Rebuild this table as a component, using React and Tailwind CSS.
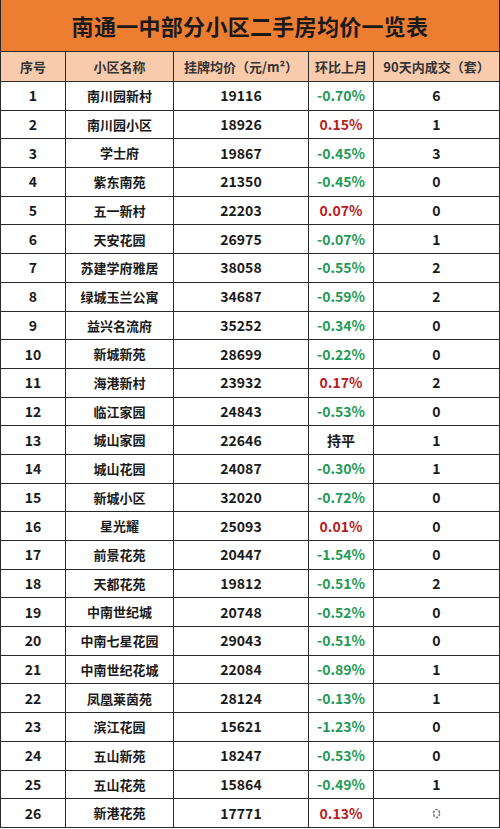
const ROWS = [
  [1, "南川园新村", "19116", "-0.70%", "6"],
  [2, "南川园小区", "18926", "0.15%", "1"],
  [3, "学士府", "19867", "-0.45%", "3"],
  [4, "紫东南苑", "21350", "-0.45%", "0"],
  [5, "五一新村", "22203", "0.07%", "0"],
  [6, "天安花园", "26975", "-0.07%", "1"],
  [7, "苏建学府雅居", "38058", "-0.55%", "2"],
  [8, "绿城玉兰公寓", "34687", "-0.59%", "2"],
  [9, "益兴名流府", "35252", "-0.34%", "0"],
  [10, "新城新苑", "28699", "-0.22%", "0"],
  [11, "海港新村", "23932", "0.17%", "2"],
  [12, "临江家园", "24843", "-0.53%", "0"],
  [13, "城山家园", "22646", "持平", "1"],
  [14, "城山花园", "24087", "-0.30%", "1"],
  [15, "新城小区", "32020", "-0.72%", "0"],
  [16, "星光耀", "25093", "0.01%", "0"],
  [17, "前景花苑", "20447", "-1.54%", "0"],
  [18, "天都花苑", "19812", "-0.51%", "2"],
  [19, "中南世纪城", "20748", "-0.52%", "0"],
  [20, "中南七星花园", "29043", "-0.51%", "0"],
  [21, "中南世纪花城", "22084", "-0.89%", "1"],
  [22, "凤凰莱茵苑", "28124", "-0.13%", "1"],
  [23, "滨江花园", "15621", "-1.23%", "0"],
  [24, "五山新苑", "18247", "-0.53%", "0"],
  [25, "五山花苑", "15864", "-0.49%", "1"],
  [26, "新港花苑", "17771", "0.13%", null],
];

const HEADERS = ["序号", "小区名称", "挂牌均价（元/m²）", "环比上月", "90天内成交（套）"];

const COLS = "grid grid-cols-[65px_108px_135px_65px_126px]";
const CELL = "flex items-center justify-center border-r border-b border-[#2a2a2a]";

function changeColor(value) {
  if (value === "持平") return "text-[#1a1a1a]";
  return value.startsWith("-") ? "text-[#1f9a55]" : "text-[#b81c1c]";
}

// smudge in the last cell of the source image
function Blot() {
  return (
    <svg width="9" height="11" viewBox="0 0 9 11">
      <ellipse cx="4.5" cy="5.5" rx="3" ry="4" fill="none" stroke="#777" strokeWidth="1.6" strokeDasharray="2.5 1.2" />
    </svg>
  );
}

export default function App() {
  return (
    <div
      className="w-[500px] h-[829px] overflow-hidden bg-white text-[#1a1a1a]"
      style={{ fontFamily: '"Noto Sans CJK SC", "Noto Sans", sans-serif' }}
    >
      <div className="border-l border-[#2a2a2a]">
        <div className="h-[52px] flex items-center justify-center bg-[#ed7d31] border-r border-b border-[#2a2a2a] w-[499px]">
          <h1 className="text-[22px] font-bold tracking-[0.3px] text-[#1a1a1a]">南通一中部分小区二手房均价一览表</h1>
        </div>

        <div className={`${COLS} h-[30px] bg-[#f8cbad]`}>
          {HEADERS.map((text) => (
            <div key={text} className={`${CELL} text-[13px] font-bold text-[#333]`}>
              {text}
            </div>
          ))}
        </div>

        {ROWS.map(([no, name, price, change, deals]) => (
          <div key={no} className={`${COLS} h-[28.7px]`}>
            <div className={`${CELL} text-[14px] font-bold`}>{no}</div>
            <div className={`${CELL} text-[13px] font-semibold`}>{name}</div>
            <div className={`${CELL} text-[14px] font-bold`}>{price}</div>
            <div className={`${CELL} text-[14px] font-bold ${changeColor(change)}`}>{change}</div>
            <div className={`${CELL} text-[14px] font-bold`}>{deals ?? <Blot />}</div>
          </div>
        ))}
      </div>
    </div>
  );
}
